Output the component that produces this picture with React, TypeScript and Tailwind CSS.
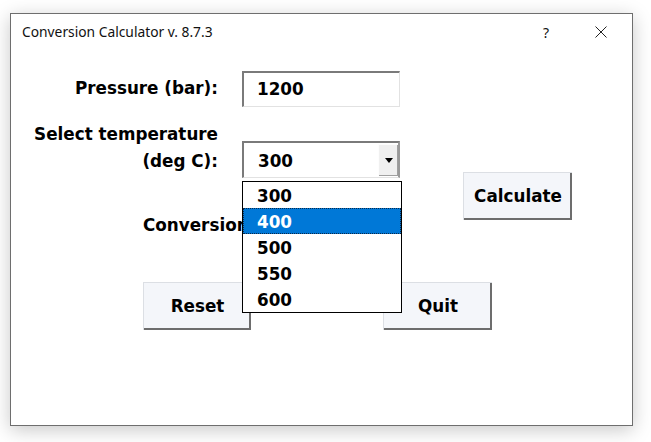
import React from "react";

const bold = { fontFamily: '"DejaVu Sans", sans-serif', fontWeight: 700 } as React.CSSProperties;

function Btn({ children, className = "" }: { children: React.ReactNode; className?: string }) {
  return (
    <div
      className={`flex items-center justify-center bg-[#f4f6fa] border-t border-l border-[#dcdfe4] shadow-[inset_-2px_-2px_0_#6d6d6d] text-[16.8px] text-black ${className}`}
      style={bold}
    >
      {children}
    </div>
  );
}

export default function App() {
  const items = ["300", "400", "500", "550", "600"];
  return (
    <div className="w-[651px] h-[442px] bg-white pl-[10px] pt-[13px]">
      <div className="relative w-[623px] h-[413px] border border-[#6e6e6e] bg-white shadow-[0_4px_18px_rgba(0,0,0,0.22)]">
        {/* title bar */}
        <div className="flex items-center h-[36px] pl-[11px] pr-[20px] text-[13.8px] text-[#111]" style={{ fontFamily: '"Noto Sans", sans-serif' }}>
          <span className="flex-1 pt-[1px]">Conversion Calculator v. 8.7.3</span>
          <span className="text-[14px] mr-[46px]">?</span>
          <svg width="12" height="12" viewBox="0 0 12 12" className="mr-[5px]">
            <path d="M0.5 0.5 L11.5 11.5 M11.5 0.5 L0.5 11.5" stroke="#222" strokeWidth="1" fill="none" />
          </svg>
        </div>

        {/* content */}
        <div className="flex flex-col">
          {/* Row 1 */}
          <div className="flex items-center mt-[21px] h-[36px]">
            <div className="w-[207px] text-right text-[16.8px] text-black" style={bold}>Pressure (bar):</div>
            <div className="ml-[24px] w-[158px] h-[36px] border-t-2 border-l-2 border-[#7a7a7a] border-r border-b border-r-[#e2e2e2] border-b-[#e2e2e2] flex items-center pl-[13px] text-[16.8px] text-black" style={bold}>
              1200
            </div>
          </div>

          {/* Row 2 */}
          <div className="flex mt-[14px]">
            <div className="w-[207px] text-right text-[16.8px] leading-[27px] text-black" style={bold}>
              <div>Select temperature</div>
              <div>(deg C):</div>
            </div>
            <div className="relative ml-[24px] mt-[20px] w-[158px] h-[37px] border-t-2 border-l-2 border-[#7a7a7a] border-r-2 border-b border-r-[#9a9a9a] border-b-[#e2e2e2] flex items-center">
              <span className="pl-[14px] pt-[3px] flex-1 text-[16.8px] text-black" style={bold}>300</span>
              <div className="w-[20px] h-[32px] bg-[#f0f0f0] border-l border-t border-[#fdfdfd] shadow-[inset_-1px_-1px_0_#a0a0a0] flex items-center justify-center">
                <svg width="8" height="5" viewBox="0 0 8 5">
                  <path d="M0 0 H8 L4 5 Z" fill="#000" />
                </svg>
              </div>
            </div>
          </div>

          {/* Row 3 */}
          <div className="flex items-start mt-[-6px] h-[64px]">
            <div className="w-[132px]" />
            <div className="mt-[43px] text-[16.8px] leading-[20px] text-black" style={bold}>Conversion</div>
            <div className="flex-1" />
            <Btn className="w-[109px] h-[48px] mr-[60px]">Calculate</Btn>
          </div>

          {/* Row 4 */}
          <div className="flex mt-[46px]">
            <Btn className="ml-[132px] w-[108px] h-[48px]">Reset</Btn>
            <Btn className="ml-[132px] w-[109px] h-[48px]">Quit</Btn>
          </div>
        </div>

        {/* dropdown list overlay */}
        <div className="absolute left-[231px] top-[167px] w-[160px] h-[132px] bg-white border border-black flex flex-col text-[16.8px]" style={bold}>
          {items.map((it) => (
            <div
              key={it}
              className={
                it === "400"
                  ? "h-[26px] flex items-center pl-[13px] pt-[3px] bg-[#0078d7] text-white border border-dotted border-[#0b2a4a]"
                  : "h-[26px] flex items-center pl-[14px] pt-[4px] text-black"
              }
            >
              {it}
            </div>
          ))}
        </div>
      </div>
    </div>
  );
}
